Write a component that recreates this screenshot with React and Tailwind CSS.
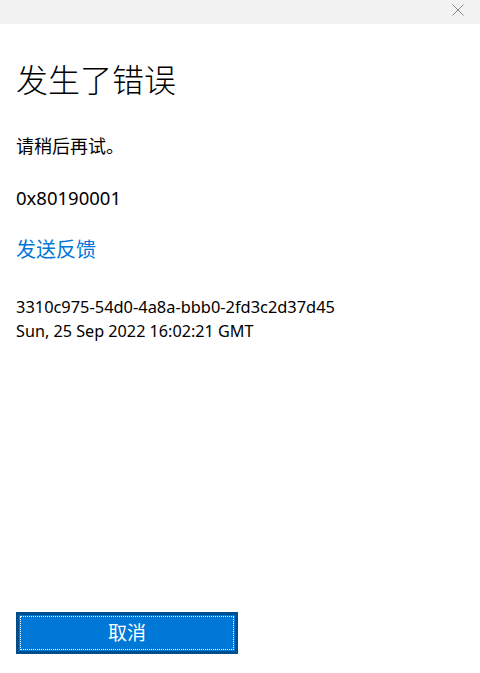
export default function App() {
  const font = { fontFamily: '"Noto Sans", "Noto Sans CJK SC", sans-serif' };
  return (
    <div className="w-[480px] h-[673px] bg-white flex flex-col text-black" style={font}>
      <div className="h-[24px] bg-[#f2f2f2] flex items-start justify-end pr-[16px] pt-[4px] shrink-0">
        <svg width="12" height="12" viewBox="0 0 12 12">
          <path d="M0.5 0.5 L11.5 11.5 M11.5 0.5 L0.5 11.5" stroke="#8a8a8a" strokeWidth="1" fill="none" />
        </svg>
      </div>
      <div className="flex flex-col px-4 flex-1">
        <div className="mt-[36px] text-[32px] leading-[40px] font-light">发生了错误</div>
        <div className="mt-[34px] text-[18px] leading-[24px]">请稍后再试。</div>
        <div className="mt-[28px] text-[18.5px] leading-[24px]">0x80190001</div>
        <div className="mt-[26px] text-[20px] leading-[28px] text-[#0078d7]">发送反馈</div>
        <div className="mt-[30px] text-[16.4px] leading-[25px]">3310c975-54d0-4a8a-bbb0-2fd3c2d37d45</div>
        <div className="text-[16.2px] leading-[25px]">Sun, 25 Sep 2022 16:02:21 GMT</div>
        <div className="flex-1" />
        <button className="relative mb-[19px] w-[222px] h-[42px] bg-[#0078d7] border-[3px] border-[#004e8c] text-white text-[19px] flex items-center justify-center">
          <span className="absolute inset-[1px] border border-dotted border-white" />
          <span className="leading-none">取消</span>
        </button>
      </div>
    </div>
  );
}
